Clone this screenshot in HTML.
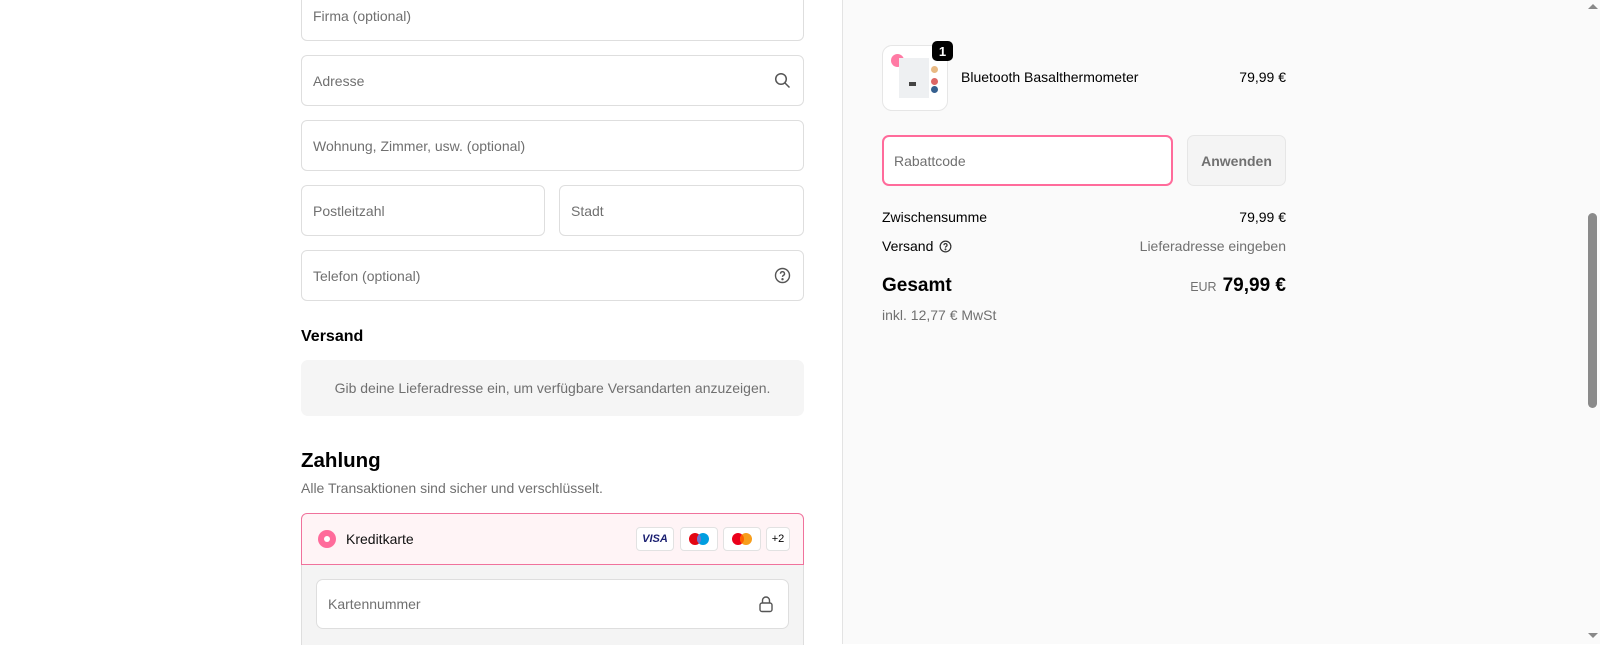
<!DOCTYPE html>
<html><head><meta charset="utf-8"><style>
*{box-sizing:border-box;margin:0;padding:0}
body{width:1600px;height:644px;overflow:hidden;background:#fff;font-family:"Liberation Sans",sans-serif;color:#000;position:relative;font-size:14px}
.abs{position:absolute}
.f{position:absolute;border:1px solid #dedede;border-radius:6px;background:#fff;color:#707070;display:flex;align-items:center;padding-left:11px}
.right{position:absolute;left:842px;top:0;width:758px;height:644px;background:#fafafa;border-left:1px solid #e3e3e3}
.badge{position:absolute;border:1px solid #e2e2e2;border-radius:4px;background:#fff;display:flex;align-items:center;justify-content:center}
</style></head><body>
<div class="f" style="left:301px;top:-10px;width:503px;height:51px">Firma (optional)</div>
<div class="f" style="left:301px;top:55px;width:503px;height:51px">Adresse
<svg class="abs" style="right:12px;top:16px" width="17" height="17" viewBox="0 0 17 17" fill="none" stroke="#555" stroke-width="1.5"><circle cx="7" cy="7" r="5.3"/><path d="M11 11l4.5 4.5"/></svg></div>
<div class="f" style="left:301px;top:120px;width:503px;height:51px">Wohnung, Zimmer, usw. (optional)</div>
<div class="f" style="left:301px;top:185px;width:244px;height:51px">Postleitzahl</div>
<div class="f" style="left:559px;top:185px;width:245px;height:51px">Stadt</div>
<div class="f" style="left:301px;top:250px;width:503px;height:51px">Telefon (optional)
<svg class="abs" style="right:12px;top:16px" width="17" height="17" viewBox="0 0 17 17" fill="none" stroke="#555" stroke-width="1.4"><circle cx="8.5" cy="8.5" r="7"/><path d="M6.5 6.7a2 2 0 1 1 2.8 1.8c-.6.3-.8.7-.8 1.4"/><circle cx="8.5" cy="12.2" r=".5" fill="#555"/></svg></div>
<div class="abs" style="left:301px;top:328px;font-weight:bold;font-size:16px">Versand</div>
<div class="abs" style="left:301px;top:360px;width:503px;height:56px;background:#f5f5f5;border-radius:7px;color:#707070;display:flex;align-items:center;justify-content:center">Gib deine Lieferadresse ein, um verfügbare Versandarten anzuzeigen.</div>
<div class="abs" style="left:301px;top:449px;font-weight:bold;font-size:20.5px">Zahlung</div>
<div class="abs" style="left:301px;top:480px;color:#707070">Alle Transaktionen sind sicher und verschlüsselt.</div>
<div class="abs" style="left:301px;top:513px;width:503px;height:52px;background:#fff4f6;border:1px solid #f0729c;border-radius:6px 6px 0 0">
<div class="abs" style="left:16px;top:16px;width:18px;height:18px;border-radius:50%;background:#ff6b9b"><div class="abs" style="left:6px;top:6px;width:6px;height:6px;border-radius:50%;background:#fff"></div></div>
<div class="abs" style="left:44px;top:17px;color:#111">Kreditkarte</div>
</div>
<div class="badge" style="left:636px;top:527px;width:38px;height:24px;font-weight:bold;font-style:italic;color:#1a1f71;font-size:11px">VISA</div>
<div class="badge" style="left:680px;top:527px;width:38px;height:24px"><svg width="26" height="16"><circle cx="9" cy="8" r="6" fill="#e30613"/><circle cx="17" cy="8" r="6" fill="#009ee0"/><path d="M13 3.5a6 6 0 0 1 0 9a6 6 0 0 1 0-9z" fill="#7375cf"/></svg></div>
<div class="badge" style="left:723px;top:527px;width:38px;height:24px"><svg width="26" height="16"><circle cx="9" cy="8" r="6" fill="#eb001b"/><circle cx="17" cy="8" r="6" fill="#f79e1b"/><path d="M13 3.5a6 6 0 0 1 0 9a6 6 0 0 1 0-9z" fill="#ff5f00"/></svg></div>
<div class="badge" style="left:766px;top:527px;width:24px;height:24px;font-size:11px">+2</div>
<div class="abs" style="left:301px;top:565px;width:503px;height:80px;background:#f4f4f4;border-left:1px solid #dedede;border-right:1px solid #dedede"></div>
<div class="f" style="left:316px;top:579px;width:473px;height:50px;border-radius:7px">Kartennummer
<svg class="abs" style="right:14px;top:15px" width="16" height="18" viewBox="0 0 16 18" fill="none" stroke="#555" stroke-width="1.4"><rect x="2" y="8" width="12" height="8.5" rx="2"/><path d="M4.5 8V5.5a3.5 3.5 0 0 1 7 0V8"/></svg></div>
<div class="right">
<div class="abs" style="left:39px;top:45px;width:66px;height:66px;border:1px solid #e6e6e6;border-radius:10px;background:#fff">
<div class="abs" style="left:8px;top:8px;width:13px;height:13px;border-radius:50%;background:#ff7aa4"></div>
<div class="abs" style="left:16px;top:12px;width:30px;height:40px;background:#eef0f2"></div>
<div class="abs" style="left:26px;top:36px;width:7px;height:4px;background:#444"></div>
<div class="abs" style="left:48px;top:20px;width:7px;height:7px;border-radius:50%;background:#e8b983"></div>
<div class="abs" style="left:48px;top:32px;width:7px;height:7px;border-radius:50%;background:#d66"></div>
<div class="abs" style="left:48px;top:40px;width:7px;height:7px;border-radius:50%;background:#35608f"></div>
</div>
<div class="abs" style="left:89px;top:41px;width:21px;height:20px;border-radius:5px;background:#000;color:#fff;font-weight:bold;font-size:13px;display:flex;align-items:center;justify-content:center">1</div>
<div class="abs" style="left:118px;top:69px">Bluetooth Basalthermometer</div>
<div class="abs" style="right:314px;top:69px">79,99 €</div>
<div class="abs" style="left:39px;top:135px;width:291px;height:51px;border:2px solid #ff6b9b;border-radius:7px;background:#fff;color:#707070;padding:16px 0 0 10px">Rabattcode</div>
<div class="abs" style="left:344px;top:135px;width:99px;height:51px;border:1px solid #e6e6e6;border-radius:7px;background:#f4f4f4;color:#707070;font-weight:bold;display:flex;align-items:center;justify-content:center">Anwenden</div>
<div class="abs" style="left:39px;top:209px">Zwischensumme</div>
<div class="abs" style="right:314px;top:209px">79,99 €</div>
<div class="abs" style="left:39px;top:238px">Versand <svg style="vertical-align:-2px;margin-left:2px" width="13" height="13" viewBox="0 0 17 17" fill="none" stroke="#333" stroke-width="1.6"><circle cx="8.5" cy="8.5" r="7"/><path d="M6.5 6.7a2 2 0 1 1 2.8 1.8c-.6.3-.8.7-.8 1.4"/><circle cx="8.5" cy="12.2" r=".5" fill="#333"/></svg></div>
<div class="abs" style="right:314px;top:238px;color:#707070">Lieferadresse eingeben</div>
<div class="abs" style="left:39px;top:275px;font-weight:bold;font-size:19px">Gesamt</div>
<div class="abs" style="right:314px;top:275px;font-weight:bold;font-size:19px"><span style="font-size:12.5px;font-weight:normal;color:#707070;margin-right:6px">EUR</span>79,99 €</div>
<div class="abs" style="left:39px;top:307px;color:#707070">inkl. 12,77 € MwSt</div>
</div>
<div class="abs" style="left:1588px;top:4px;width:0;height:0;border-left:5px solid transparent;border-right:5px solid transparent;border-bottom:5px solid #888"></div>
<div class="abs" style="left:1588px;top:213px;width:9px;height:195px;border-radius:5px;background:#8a8a8a"></div>
<div class="abs" style="left:1588px;top:633px;width:0;height:0;border-left:5px solid transparent;border-right:5px solid transparent;border-top:5px solid #888"></div>
</body></html>
